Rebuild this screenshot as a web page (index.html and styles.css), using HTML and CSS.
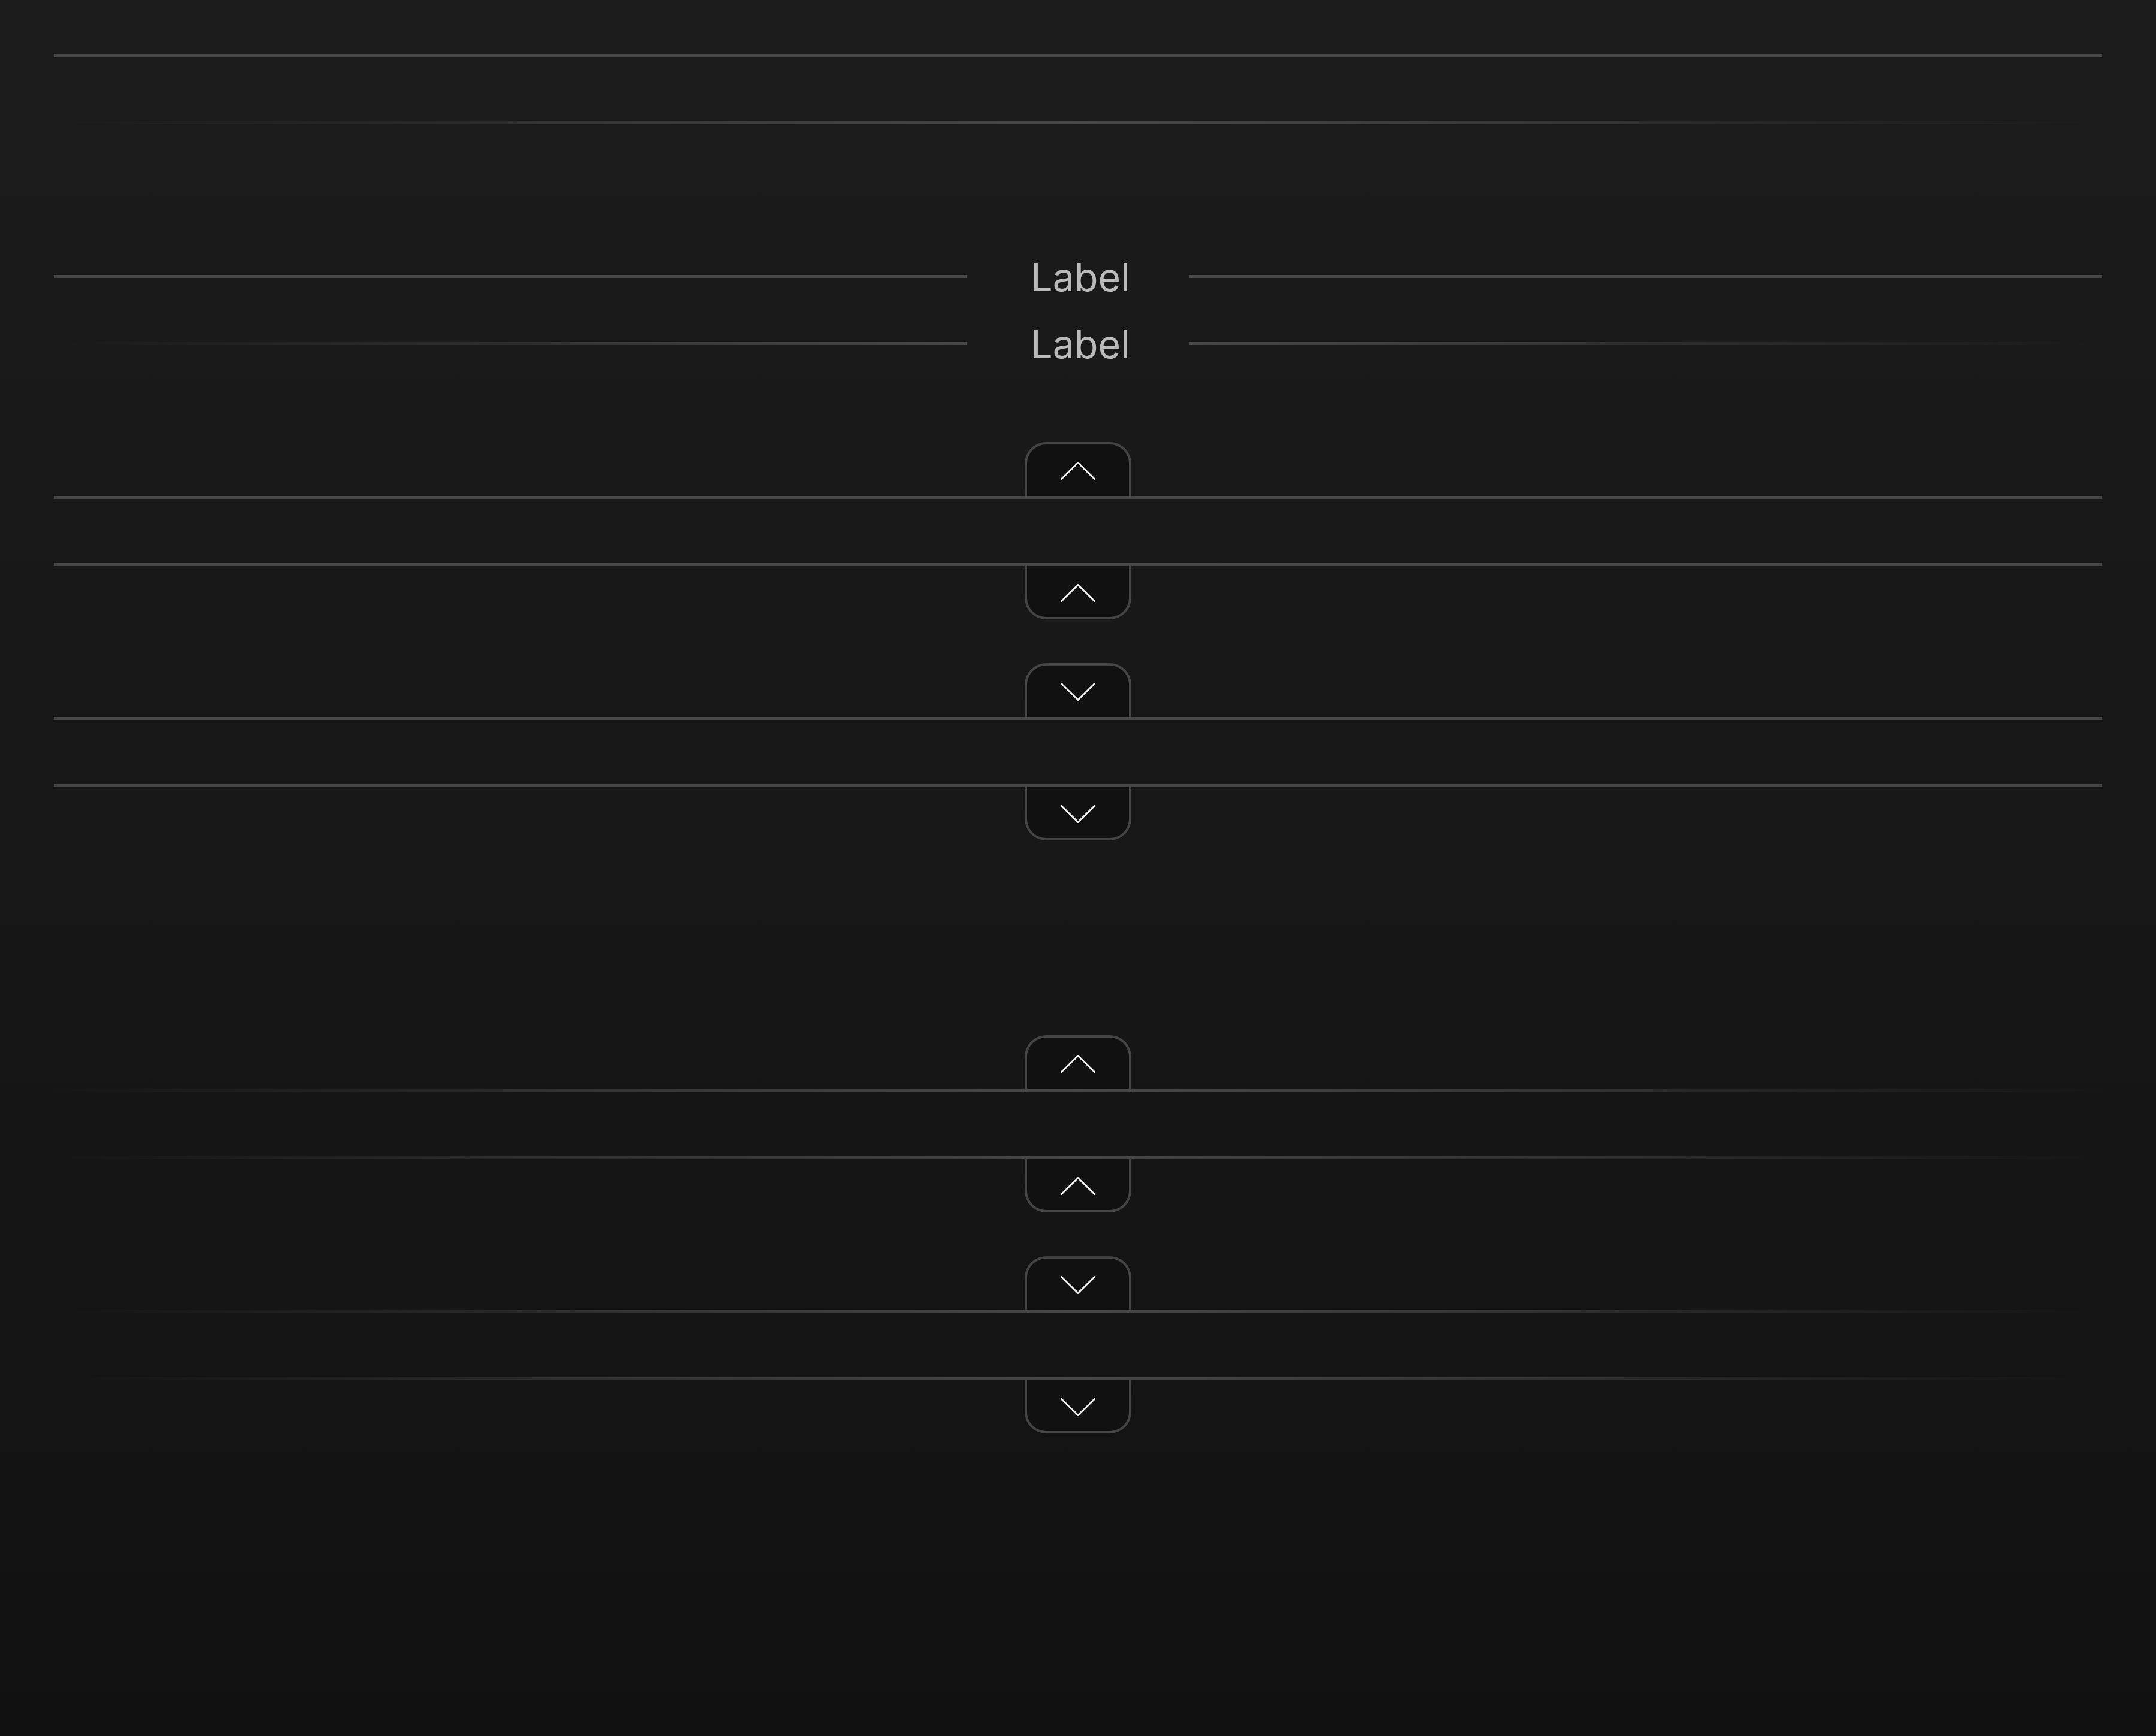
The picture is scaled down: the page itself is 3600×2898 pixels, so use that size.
FILE: index.html
```html
<!DOCTYPE html>
<html lang="en">
<head>
<meta charset="utf-8">
<title>Dividers</title>
<link rel="stylesheet" href="styles.css">
</head>
<body>
<main class="page">
  <section class="group">
    <div class="row"><div class="line"></div></div>
    <div class="row"><div class="line fade"></div></div>
  </section>

  <section class="group">
    <div class="row"><div class="line"></div><span class="label">Label</span><div class="line"></div></div>
    <div class="row"><div class="line fade-in"></div><span class="label">Label</span><div class="line fade-out"></div></div>
  </section>

  <section class="group">
    <div class="row">
      <div class="line"></div>
      <button class="tab tab-top" aria-label="Collapse"><svg class="chev" viewBox="0 0 58 30"><polyline points="1.5,28.5 29,1.5 56.5,28.5"/></svg></button>
    </div>
    <div class="row">
      <div class="line"></div>
      <button class="tab tab-bottom" aria-label="Collapse"><svg class="chev" viewBox="0 0 58 30"><polyline points="1.5,28.5 29,1.5 56.5,28.5"/></svg></button>
    </div>
  </section>

  <section class="group">
    <div class="row">
      <div class="line"></div>
      <button class="tab tab-top" aria-label="Expand"><svg class="chev" viewBox="0 0 58 30"><polyline points="1.5,1.5 29,28.5 56.5,1.5"/></svg></button>
    </div>
    <div class="row">
      <div class="line"></div>
      <button class="tab tab-bottom" aria-label="Expand"><svg class="chev" viewBox="0 0 58 30"><polyline points="1.5,1.5 29,28.5 56.5,1.5"/></svg></button>
    </div>
  </section>

  <section class="group group-spaced">
    <div class="row">
      <div class="line fade"></div>
      <button class="tab tab-top" aria-label="Collapse"><svg class="chev" viewBox="0 0 58 30"><polyline points="1.5,28.5 29,1.5 56.5,28.5"/></svg></button>
    </div>
    <div class="row">
      <div class="line fade"></div>
      <button class="tab tab-bottom" aria-label="Collapse"><svg class="chev" viewBox="0 0 58 30"><polyline points="1.5,28.5 29,1.5 56.5,28.5"/></svg></button>
    </div>
  </section>

  <section class="group">
    <div class="row">
      <div class="line fade"></div>
      <button class="tab tab-top" aria-label="Expand"><svg class="chev" viewBox="0 0 58 30"><polyline points="1.5,1.5 29,28.5 56.5,1.5"/></svg></button>
    </div>
    <div class="row">
      <div class="line fade"></div>
      <button class="tab tab-bottom" aria-label="Expand"><svg class="chev" viewBox="0 0 58 30"><polyline points="1.5,1.5 29,28.5 56.5,1.5"/></svg></button>
    </div>
  </section>
</main>
</body>
</html>
```

FILE: styles.css
```css
* {
  box-sizing: border-box;
}

html,
body {
  margin: 0;
  padding: 0;
}

body {
  min-height: 2898px;
  background: linear-gradient(180deg, #1b1b1b 0%, #161616 60%, #111111 100%);
  font-family: Inter, "Noto Sans", "Liberation Sans", sans-serif;
}

.page {
  padding: 36.3px 90px 0;
  display: flex;
  flex-direction: column;
  gap: 145px;
}

.group {
  display: flex;
  flex-direction: column;
}

.group-spaced {
  margin-top: 252px;
}

.row {
  position: relative;
  height: 112px;
  display: flex;
  align-items: center;
}

.line {
  position: relative;
  z-index: 1;
  flex: 1;
  height: 4.6px;
  background: #464646;
}

.line.fade {
  background: linear-gradient(90deg, rgba(70, 70, 70, 0) 0%, #464646 50%, rgba(70, 70, 70, 0) 100%);
}

.line.fade-in {
  background: linear-gradient(90deg, rgba(70, 70, 70, 0) 0%, #464646 100%);
}

.line.fade-out {
  background: linear-gradient(90deg, #464646 0%, rgba(70, 70, 70, 0) 100%);
}

.label {
  padding: 3px 99px 0 107px;
  font-size: 64.5px;
  line-height: normal;
  color: #bababa;
}

.tab {
  position: absolute;
  left: 50%;
  width: 178px;
  margin: 0 0 0 -89px;
  display: flex;
  align-items: flex-start;
  justify-content: center;
  background: #111111;
  border: 4.6px solid #454545;
  cursor: pointer;
  font: inherit;
}

.tab-top {
  bottom: 58.3px;
  height: 90px;
  padding: 29.4px 0 0;
  border-bottom: 0;
  border-radius: 36px 36px 0 0;
}

.tab-bottom {
  top: 58.3px;
  height: 89px;
  padding: 30px 0 0;
  border-top: 0;
  border-radius: 0 0 36px 36px;
}

.chev {
  display: block;
  width: 58px;
  height: 30px;
  fill: none;
  stroke: #f2f2f2;
  stroke-width: 2.8;
  stroke-linecap: round;
  stroke-linejoin: miter;
}
```
